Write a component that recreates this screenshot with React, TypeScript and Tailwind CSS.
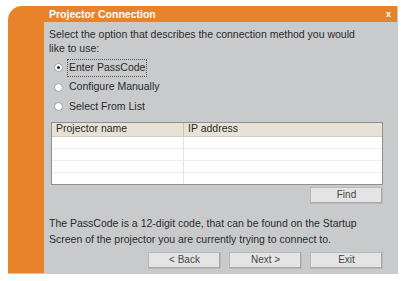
import { useState } from "react";

const font = "font-['Liberation_Sans','Arial',sans-serif]";

const Radio = ({ checked, label, focused }: { checked: boolean; label: string; focused?: boolean }) => (
  <label className="flex items-center h-[19.5px] pl-[5px]">
    <span className="w-[9px] h-[9px] rounded-full bg-white border border-[#a0a0a0] flex items-center justify-center">
      {checked && <span className="w-[3px] h-[3px] rounded-full bg-[#222]" />}
    </span>
    <span className={`ml-[5px] px-[1px] ${focused ? "outline outline-1 outline-dotted outline-[#555]" : ""}`}>{label}</span>
  </label>
);

const Button = ({ children }: { children: React.ReactNode }) => (
  <button
    type="button"
    className="w-[73px] h-[17px] bg-[#e4e4e4] border border-[#b8b8b8] text-[#444] text-[10px] leading-none flex items-center justify-center shadow-[inset_-1px_-1px_0_#a8a8a8]"
  >
    {children}
  </button>
);

export default function App() {
  const [method] = useState("passcode");

  return (
    <div className={`w-[403px] h-[281px] overflow-hidden bg-white ${font} text-[10.5px] text-[#2a2a2a] whitespace-nowrap`}>
      <div className="pl-[8px] pt-[6px]">
        <div className="w-[390px] h-[268px] bg-[#e9832b] rounded-tl-[14px] flex border-r border-b border-[#c9c9c9]">
          <div className="w-[36px] shrink-0" />
          <div className="flex-1 flex flex-col pt-[2px]">
            <div className="h-[14px] flex items-center justify-between pl-[5px] pr-[6px]">
              <span className="text-white font-bold text-[10.5px]">Projector Connection</span>
              <span className="text-white text-[9px] font-bold">x</span>
            </div>
            <div className="flex-1 bg-[#c9cacc] pl-[5px] pr-[14px] pt-[5px]">
              <p className="leading-[14px]">
                Select the option that describes the connection method you would
                <br />
                like to use:
              </p>
              <div className="mt-[3px]">
                <Radio checked={method === "passcode"} label="Enter PassCode" focused />
                <Radio checked={method === "manual"} label="Configure Manually" />
                <Radio checked={method === "list"} label="Select From List" />
              </div>
              <div className="ml-[2px] mt-[5px] h-[63px] bg-white border border-[#8f8f8f] flex flex-col">
                <div className="h-[14px] bg-[#e6e3d6] flex border-b border-[#cfccc0]">
                  <div className="w-[132px] pl-[4px] border-r border-[#c8c5b8] flex items-center">Projector name</div>
                  <div className="pl-[4px] flex items-center">IP address</div>
                </div>
                {[0, 1, 2, 3].map((i) => (
                  <div key={i} className="flex-1 flex border-b border-[#ececec] last:border-b-0">
                    <div className="w-[132px] border-r border-[#e4e4e4]" />
                    <div className="flex-1" />
                  </div>
                ))}
              </div>
              <div className="flex justify-end mt-[2px]">
                <Button>Find</Button>
              </div>
              <p className="leading-[16px] mt-[11px]">
                The PassCode is a 12-digit code, that can be found on the Startup
                <br />
                Screen of the projector you are currently trying to connect to.
              </p>
              <div className="flex justify-end gap-[8px] mt-[5px]">
                <Button>&lt; Back</Button>
                <Button>Next &gt;</Button>
                <Button>Exit</Button>
              </div>
            </div>
          </div>
        </div>
      </div>
    </div>
  );
}
